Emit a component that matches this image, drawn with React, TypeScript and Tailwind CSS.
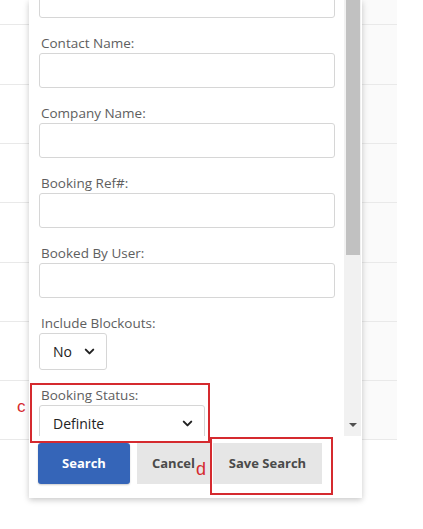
import { ChevronDown } from "lucide-react";

const fields = ["Contact Name:", "Company Name:", "Booking Ref#:", "Booked By User:"];

function Label({ text }: { text: string }) {
  return (
    <div className="mt-[16px] mb-[1px] pl-[2px] h-[18px] leading-[18px] text-[13.5px] text-[#5e5e5e]">{text}</div>
  );
}

function FakeSelect({ value, width }: { value: string; width: string }) {
  return (
    <div
      className={`${width} h-[37px] flex items-center justify-between pl-[13px] pr-[9px] border border-[#d6d6d6] rounded-[3px] bg-white text-[14px] text-[#222]`}
    >
      <span>{value}</span>
      <ChevronDown size={15} strokeWidth={3.2} className="text-[#222]" />
    </div>
  );
}

export default function App() {
  const rows = [25, 60, 59, 59, 60, 59, 59, 59];

  return (
    <div className="relative w-[423px] h-[529px] bg-white overflow-hidden font-['Open_Sans',sans-serif]">
      {/* table behind the popup */}
      <div className="w-[397px] flex flex-col">
        {rows.map((h, i) => (
          <div key={i} className="border-b border-[#e9e9e9] flex" style={{ height: h }}>
            <div className="flex-1" />
            <div className="w-[35px] bg-[#fafafa]" />
          </div>
        ))}
      </div>

      {/* search popup */}
      <div className="absolute left-[29px] top-0 w-[333px] h-[498px] bg-white shadow-[0_2px_6px_rgba(0,0,0,0.22)] flex flex-col">
        <div className="h-[436px] flex overflow-hidden">
          <div className="flex-1 pl-[10px] pr-[9px] mt-[-17px]">
            <div className="h-[35px] border border-[#d6d6d6] rounded-[3px]" />
            {fields.map((f) => (
              <div key={f}>
                <Label text={f} />
                <div className="h-[35px] border border-[#d6d6d6] rounded-[3px]" />
              </div>
            ))}
            <Label text="Include Blockouts:" />
            <FakeSelect value="No" width="w-[68px]" />
            <div className="mt-[10px]">
              <Label text="Booking Status:" />
            </div>
            <FakeSelect value="Definite" width="w-[166px]" />
          </div>
          {/* scrollbar */}
          <div className="w-[17px] mr-[1px] bg-[#f1f1f1] flex flex-col items-center">
            <div className="w-[14px] h-[255px] bg-[#c1c1c1]" />
            <div className="flex-1" />
            <div className="mb-[9px] w-0 h-0 border-l-[4px] border-r-[4px] border-t-[4px] border-l-transparent border-r-transparent border-t-[#505050]" />
          </div>
        </div>

        <div className="flex gap-[7px] pl-[9px] pt-[7px]">
          <button className="w-[92px] h-[41px] rounded-[3px] bg-[#3565b8] text-white text-[13px] font-bold shadow-[0_1px_2px_rgba(0,0,0,0.2)]">
            Search
          </button>
          <button className="w-[73px] h-[41px] bg-[#e6e6e6] text-[#4a4a4a] text-[13px] font-bold">
            Cancel
          </button>
          <button className="ml-[-4px] w-[109px] h-[41px] bg-[#e6e6e6] text-[#4a4a4a] text-[13px] font-bold">
            Save Search
          </button>
        </div>
      </div>

      {/* annotations */}
      <div className="absolute left-[30px] top-[383px] w-[180px] h-[60px] border-2 border-[#d52a2f]" />
      <div className="absolute left-[210px] top-[437px] w-[123px] h-[58px] border-2 border-[#d52a2f]" />
      <span className="absolute left-[17px] top-[398px] text-[17px] leading-none text-[#d52a2f] font-['Liberation_Sans',sans-serif]">
        c
      </span>
      <span className="absolute left-[196px] top-[460px] text-[18px] leading-none text-[#d52a2f] font-['Liberation_Sans',sans-serif]">
        d
      </span>
    </div>
  );
}
